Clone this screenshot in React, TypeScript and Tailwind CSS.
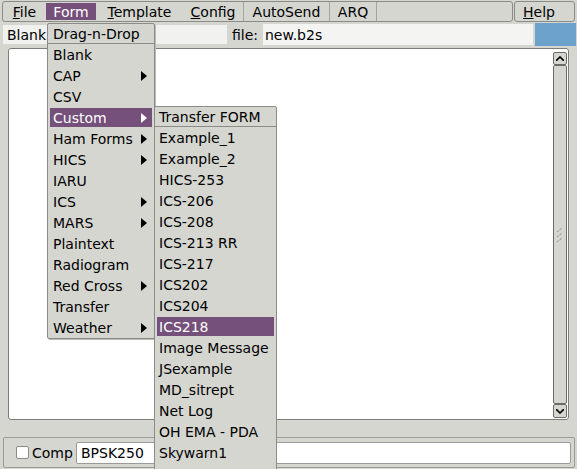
const formItems: { label: string; sub?: boolean }[] = [
  { label: "Blank" },
  { label: "CAP", sub: true },
  { label: "CSV" },
  { label: "Custom", sub: true },
  { label: "Ham Forms", sub: true },
  { label: "HICS", sub: true },
  { label: "IARU" },
  { label: "ICS", sub: true },
  { label: "MARS", sub: true },
  { label: "Plaintext" },
  { label: "Radiogram" },
  { label: "Red Cross", sub: true },
  { label: "Transfer" },
  { label: "Weather", sub: true },
];

const customItems = [
  "Example_1",
  "Example_2",
  "HICS-253",
  "ICS-206",
  "ICS-208",
  "ICS-213 RR",
  "ICS-217",
  "ICS202",
  "ICS204",
  "ICS218",
  "Image Message",
  "JSexample",
  "MD_sitrept",
  "Net Log",
  "OH EMA - PDA",
  "Skywarn1",
];

function Arrow({ white }: { white?: boolean }) {
  return (
    <svg width="6" height="10" viewBox="0 0 6 10">
      <path d="M0 0 L6 5 L0 10 Z" fill={white ? "#ffffff" : "#000000"} />
    </svg>
  );
}

function MenuRow({ label, sub, active, pl }: { label: string; sub?: boolean; active?: boolean; pl: string }) {
  return (
    <div className="h-[21px] px-[2px] py-[1px]">
      <div
        className={`h-[19px] flex items-center justify-between pr-[5px] ${pl} ${
          active ? "bg-[#75507b] text-white" : "text-black"
        }`}
      >
        <span className="whitespace-nowrap">{label}</span>
        {sub && <Arrow white={active} />}
      </div>
    </div>
  );
}

function BarItem({ w, active, border, children }: { w: string; active?: boolean; border?: boolean; children: React.ReactNode }) {
  return (
    <div className={`${w} h-[19px] flex items-center ${border ? "border-r border-[#a3a49f]" : ""}`}>
      <div
        className={`w-full h-[17px] flex items-center justify-center ${
          active ? "bg-[#75507b] text-white" : "text-black"
        }`}
      >
        {children}
      </div>
    </div>
  );
}

export default function App() {
  return (
    <div
      className="relative w-[577px] h-[469px] overflow-hidden bg-[#d5d6d0] text-[14px] leading-none text-black"
      style={{ fontFamily: '"DejaVu Sans", sans-serif' }}
    >
      {/* menu bar */}
      <div className="flex h-[23px] pt-[1px] pl-[2px]">
        <div className="w-[511px] h-[21px] border border-[#8b8c87] rounded-[3px] flex">
          <BarItem w="w-[43px]">
            <span><span className="underline">F</span>ile</span>
          </BarItem>
          <BarItem w="w-[50px]" active>
            <span>Form</span>
          </BarItem>
          <BarItem w="w-[87px]">
            <span><span className="underline">T</span>emplate</span>
          </BarItem>
          <BarItem w="w-[61px]" border>
            <span><span className="underline">C</span>onfig</span>
          </BarItem>
          <BarItem w="w-[86px]" border>
            <span>AutoSend</span>
          </BarItem>
          <BarItem w="w-[47px]" border>
            <span>ARQ</span>
          </BarItem>
        </div>
        <div className="ml-[1px] w-[61px] h-[21px] border border-[#8b8c87] rounded-[3px] flex items-center pl-[8px]">
          <span><span className="underline">H</span>elp</span>
        </div>
      </div>

      {/* file row */}
      <div className="flex h-[23px] items-center">
        <div className="ml-[3px] w-[224px] h-[19px] bg-[#f1f1f0] flex items-center pl-[4px]">Blank</div>
        <span className="ml-[5px] w-[31px]">file:</span>
        <div className="w-[270px] h-[21px] bg-[#f4f4f3] flex items-center pl-[2px]">new.b2s</div>
        <div className="ml-[2px] w-[41px] h-[23px] bg-[#6da2cd]" />
      </div>

      {/* text area */}
      <div className="mt-[2px] ml-[8px] w-[561px] h-[372px] border border-[#7c7d79] rounded-[3px] bg-white flex">
        <div className="flex-1" />
        <div className="w-[15px] pt-[3px] pb-[1px] flex flex-col">
          <div className="h-[13px] w-[14px] border border-[#6b6c68] rounded-[2px] bg-[#d5d6d0] flex items-center justify-center">
            <svg width="8" height="5" viewBox="0 0 8 5">
              <path d="M0 5 L4 1 L8 5" fill="none" stroke="#000" strokeWidth="1.6" />
            </svg>
          </div>
          <div className="flex-1 w-[14px] border border-[#6b6c68] rounded-[2px] bg-[#d5d6d0] flex items-center justify-center">
            <svg width="8" height="16" viewBox="0 0 8 16">
              <path d="M1 5 L6 1 M1 10 L6 6 M1 15 L6 11" stroke="#6f706b" strokeWidth="1" strokeDasharray="1 1" />
            </svg>
          </div>
          <div className="h-[14px] w-[14px] border border-[#6b6c68] rounded-[2px] bg-[#d5d6d0] flex items-center justify-center">
            <svg width="8" height="5" viewBox="0 0 8 5">
              <path d="M0 0 L4 4 L8 0" fill="none" stroke="#000" strokeWidth="1.6" />
            </svg>
          </div>
        </div>
      </div>

      {/* bottom bar */}
      <div className="mt-[17px] ml-[3px] w-[572px] h-[31px] border border-[#9a9b96] rounded-[2px] flex items-center">
        <div className="ml-[12px] w-[13px] h-[13px] bg-white border border-[#8a8b86] rounded-[2px]" />
        <span className="ml-[3px] w-[44px]">Comp</span>
        <div className="w-[495px] h-[22px] bg-white border border-[#9a9b96] rounded-[2px] flex items-center pl-[4px]">
          BPSK250
        </div>
      </div>

      {/* Form dropdown */}
      <div className="absolute left-[47px] top-[23px] w-[108px] h-[316px] bg-[#d5d6d0] border border-[#8b8c87] rounded-[2px] shadow-[1px_1px_0_#b9bab5]">
        <div className="h-[20px] border-b border-[#8b8c87] flex items-center pl-[5px]">Drag-n-Drop</div>
        {formItems.map((it) => (
          <MenuRow key={it.label} label={it.label} sub={it.sub} active={it.label === "Custom"} pl="pl-[3px]" />
        ))}
      </div>

      {/* Custom submenu */}
      <div className="absolute left-[154px] top-[106px] w-[123px] h-[420px] bg-[#d5d6d0] border border-[#8b8c87] rounded-[2px]">
        <div className="h-[20px] border-b border-[#8b8c87] flex items-center pl-[4px]">Transfer FORM</div>
        {customItems.map((s) => (
          <MenuRow key={s} label={s} active={s === "ICS218"} pl="pl-[2px]" />
        ))}
      </div>
    </div>
  );
}
